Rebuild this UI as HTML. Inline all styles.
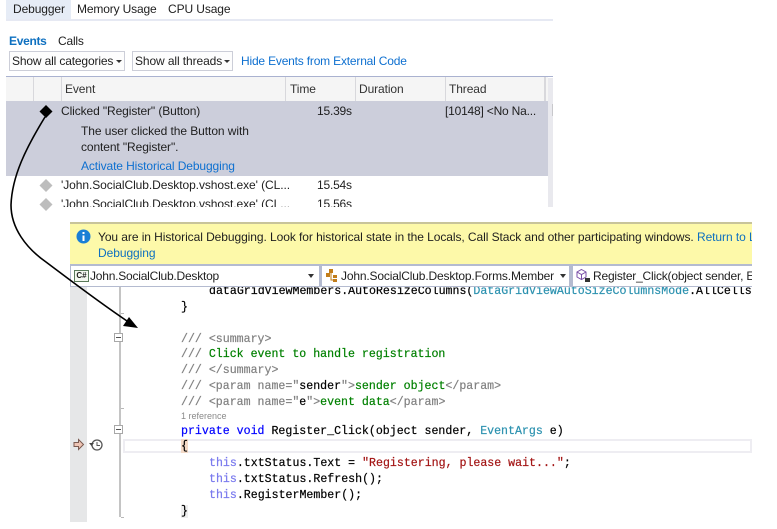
<!DOCTYPE html>
<html><head><meta charset="utf-8">
<style>
html,body{margin:0;padding:0;background:#fff}
#p{position:relative;width:777px;height:529px;overflow:hidden;background:#fff;font-family:"Liberation Sans",sans-serif;font-size:12px;color:#1e1e1e}
#p div{position:absolute}
.t{white-space:nowrap;line-height:16px;height:16px}
.c{white-space:pre;font-family:"Liberation Mono",monospace;font-size:11.6px;line-height:16px;height:16px;color:#000;-webkit-text-stroke:.2px}
.g{color:#808080}.gr{color:#008000}.b{color:#0000ff}.l{color:#2b91af}.k{color:#7a7aee}.r{color:#a31515}
.a{color:#0e70c0}
.dd{background:#fdfdfd;border:1px solid #ccced8;box-sizing:border-box;height:20px}
</style></head><body>
<div id="p">
<!-- tabs -->
<div style="left:6px;top:0;width:65px;height:19px;background:#e6ecf6"></div>
<div style="left:6px;top:19px;width:547px;height:2px;background:#e6e9f3"></div>
<div class="t" style="left:13px;top:1px;letter-spacing:-.1px">Debugger</div>
<div class="t" style="left:77px;top:1px;letter-spacing:-.15px">Memory Usage</div>
<div class="t" style="left:168px;top:1px;letter-spacing:-.1px">CPU Usage</div>
<div class="t" style="left:9px;top:33px;color:#0e70c0;font-weight:bold;letter-spacing:-.3px">Events</div>
<div class="t" style="left:58px;top:33px;letter-spacing:-.2px">Calls</div>
<!-- dropdowns -->
<div class="dd" style="left:9px;top:51px;width:116px"></div>
<div class="t" style="left:12px;top:53px;letter-spacing:-.15px">Show all categories</div>
<div style="left:116px;top:60px;border:3px solid transparent;border-top:3px solid #333;border-bottom:0"></div>
<div class="dd" style="left:132px;top:51px;width:101px"></div>
<div class="t" style="left:135px;top:53px;letter-spacing:-.1px">Show all threads</div>
<div style="left:224px;top:60px;border:3px solid transparent;border-top:3px solid #333;border-bottom:0"></div>
<div class="t a" style="left:241px;top:53px;letter-spacing:-.19px;color:#0e70d0">Hide Events from External Code</div>
<!-- header -->
<div style="left:6px;top:76px;width:547px;height:1px;background:#aab2d0"></div>
<div style="left:6px;top:77px;width:542px;height:24px;background:#f5f5f5"></div>
<div style="left:33px;top:77px;width:1px;height:24px;background:#d8d8dc"></div>
<div style="left:61px;top:77px;width:1px;height:24px;background:#d8d8dc"></div>
<div style="left:285px;top:77px;width:1px;height:24px;background:#d8d8dc"></div>
<div style="left:355px;top:77px;width:1px;height:24px;background:#d8d8dc"></div>
<div style="left:445px;top:77px;width:1px;height:24px;background:#d8d8dc"></div>
<div style="left:544px;top:77px;width:2px;height:24px;background:#d8d8dc"></div>
<div class="t" style="left:65px;top:81px;letter-spacing:-.1px;color:#333">Event</div>
<div class="t" style="left:290px;top:81px;letter-spacing:-.1px;color:#333">Time</div>
<div class="t" style="left:359px;top:81px;letter-spacing:-.1px;color:#333">Duration</div>
<div class="t" style="left:449px;top:81px;letter-spacing:-.1px;color:#333">Thread</div>
<!-- scrollbar -->
<div style="left:548px;top:78px;width:5px;height:129px;background:#e9e9ee"></div>
<div style="left:552px;top:104px;width:1px;height:12px;background:#c8c8cc"></div>
<!-- selected -->
<div style="left:6px;top:101px;width:542px;height:75px;background:#cccedb"></div>
<div class="t" style="left:61px;top:103px;letter-spacing:-.1px">Clicked "Register" (Button)</div>
<div class="t" style="left:317px;top:103px;letter-spacing:-.2px">15.39s</div>
<div class="t" style="left:445px;top:103px;letter-spacing:-.2px">[10148] &lt;No Na...</div>
<div class="t" style="left:81px;top:123px;letter-spacing:-.07px">The user clicked the Button with</div>
<div class="t" style="left:81px;top:139px;letter-spacing:-.1px">content "Register".</div>
<div class="t" style="left:81px;top:158px;letter-spacing:-.1px;color:#0e70d0">Activate Historical Debugging</div>
<!-- rows -->
<div class="t" style="left:61px;top:177px;letter-spacing:-.07px">'John.SocialClub.Desktop.vshost.exe' (CL...</div>
<div class="t" style="left:317px;top:177px;letter-spacing:-.2px">15.54s</div>
<div style="left:0;top:195px;width:548px;height:12px;overflow:hidden"><div class="t" style="left:61px;top:1px;letter-spacing:-.07px">'John.SocialClub.Desktop.vshost.exe' (CL...</div><div class="t" style="left:317px;top:1px;letter-spacing:-.2px">15.56s</div></div>
<!-- diamonds -->
<svg style="position:absolute;left:0;top:0" width="777" height="529">
<path d="M46 105l6.500 6.500-6.500 6.500-6.500-6.500z" fill="#000"/>
<path d="M46 179l6.500 6.500-6.500 6.500-6.500-6.500z" fill="#bdbdbd"/>
<path d="M46 198l6.500 6.500-6.500 6.500-6.500-6.500z" fill="#bdbdbd"/>
</svg>
<!-- info bar -->
<div style="left:70px;top:222px;width:682px;height:2px;background:#c8c49a"></div>
<div style="left:70px;top:224px;width:682px;height:40px;background:#fdf9a9"></div>
<svg style="position:absolute;left:76px;top:229px" width="15" height="15"><circle cx="7.500" cy="7.500" r="7" fill="#1a7fd6"/><rect x="6.500" y="6.500" width="2" height="5.500" fill="#fff"/><rect x="6.500" y="3" width="2" height="2" fill="#fff"/></svg>
<div style="left:0;top:224px;width:752px;height:40px;overflow:hidden">
<div class="t" style="left:98px;top:5px;letter-spacing:-.07px">You are in Historical Debugging. Look for historical state in the Locals, Call Stack and other participating windows. <span style="color:#0e70c0">Return to Live</span></div>
<div class="t" style="left:98px;top:21px;letter-spacing:-.06px;color:#0e70c0">Debugging</div>
</div>
<!-- nav bar -->
<div style="left:70px;top:264px;width:682px;height:23px;background:#b4bbd0"></div>
<div style="left:71px;top:266px;width:248px;height:20px;background:#fff"></div>
<div style="left:322px;top:266px;width:247px;height:20px;background:#fff"></div>
<div style="left:573px;top:266px;width:179px;height:20px;background:#fff"></div>
<div style="left:74px;top:270px;width:13px;height:10px;border:1px solid #5a7a5a;background:#f4f8f0;font:bold 8px/10px 'Liberation Sans',sans-serif;text-align:center;color:#222">C#</div>
<div class="t" style="left:90px;top:268px;letter-spacing:-.22px">John.SocialClub.Desktop</div>
<div style="left:308px;top:274px;border:3px solid transparent;border-top:4px solid #333;border-bottom:0"></div>
<svg style="position:absolute;left:324px;top:268px" width="16" height="16"><path d="M2 5h4v4H2zM5 1h4v4H5zM9 7h4v3H9zM9 11h4v3H9z" fill="#c27d1a"/><path d="M7 5v7h3" fill="none" stroke="#c27d1a"/></svg>
<div class="t" style="left:341px;top:268px;letter-spacing:-.16px">John.SocialClub.Desktop.Forms.Member</div>
<div style="left:560px;top:274px;border:3px solid transparent;border-top:4px solid #333;border-bottom:0"></div>
<svg style="position:absolute;left:575px;top:268px" width="16" height="16"><path d="M6.500 1.500l4.500 2.500v5l-4.500 2.500-4.500-2.500v-5zM2 4l4.500 2.500 4.500-2.500M6.500 6.500v5" fill="none" stroke="#7a4fa8"/><rect x="10" y="10" width="5" height="4" fill="#333"/></svg>
<div class="t" style="left:593px;top:268px;width:159px;overflow:hidden;letter-spacing:-.2px">Register_Click(object sender, EventArgs e)</div>
<!-- code -->
<div style="left:70px;top:287px;width:682px;height:235px;background:#fff"></div>
<div style="left:70px;top:287px;width:17px;height:235px;background:#e6e7e8"></div>
<div style="left:119px;top:287px;width:2px;height:230px;background:#c4c4c4"></div>
<div style="left:121px;top:313px;width:3px;height:1px;background:#b8b8b8"></div>
<div style="left:121px;top:408px;width:3px;height:1px;background:#b8b8b8"></div>
<div style="left:121px;top:517px;width:3px;height:1px;background:#b8b8b8"></div>
<div style="left:114px;top:333px;width:7px;height:7px;border:1px solid #a8a8a8;background:#fff"></div>
<div style="left:116px;top:337px;width:5px;height:1px;background:#555"></div>
<div style="left:114px;top:425px;width:7px;height:7px;border:1px solid #a8a8a8;background:#fff"></div>
<div style="left:116px;top:429px;width:5px;height:1px;background:#555"></div>
<!-- current line -->
<div style="left:123px;top:439px;width:625px;height:10px;border:2px solid #eeedf2;background:#fff"></div>
<div style="left:181px;top:439px;width:7px;height:14px;background:#f3d9c6"></div>
<div style="left:181px;top:505px;width:7px;height:13px;background:#eeeeee"></div>
<div style="left:0;top:287px;width:752px;height:235px;overflow:hidden">
<div class="c" style="left:209px;top:-3px">dataGridViewMembers.AutoResizeColumns(<span class="l">DataGridViewAutoSizeColumnsMode</span>.AllCells);</div>
<div class="c" style="left:181px;top:13px">}</div>
<div class="c g" style="left:181px;top:45px">/// &lt;summary&gt;</div>
<div class="c gr" style="left:181px;top:59px;top:60px"><span class="g">///</span> Click event to handle registration</div>
<div class="c g" style="left:181px;top:76px">/// &lt;/summary&gt;</div>
<div class="c g" style="left:181px;top:92px">/// &lt;param name="<span style="color:#000">sender</span>"&gt;<span class="gr">sender object</span>&lt;/param&gt;</div>
<div class="c g" style="left:181px;top:108px">/// &lt;param name="<span style="color:#000">e</span>"&gt;<span class="gr">event data</span>&lt;/param&gt;</div>
<div class="t" style="left:181px;top:121px;font-size:9px;color:#8a8a8a">1 reference</div>
<div class="c" style="left:181px;top:137px"><span class="b">private void</span> Register_Click(object sender, <span class="l">EventArgs</span> e)</div>
<div class="c" style="left:181px;top:152px">{</div>
<div class="c" style="left:209px;top:169px"><span class="k">this</span>.txtStatus.Text = <span class="r">"Registering, please wait..."</span>;</div>
<div class="c" style="left:209px;top:185px"><span class="k">this</span>.txtStatus.Refresh();</div>
<div class="c" style="left:209px;top:201px"><span class="k">this</span>.RegisterMember();</div>
<div class="c" style="left:181px;top:217px">}</div>
</div>
<!-- margin icons -->
<svg style="position:absolute;left:0;top:0" width="777" height="529">
<path d="M74 442.500h4.500v-3l5 5-5 5v-3H74z" fill="#eec4b4" stroke="#7a5a50"/>
<circle cx="97" cy="445" r="5" fill="#fff" stroke="#555" stroke-width="1.300"/>
<path d="M97 442v3.500h3" fill="none" stroke="#555"/>
<path d="M89 443h5l-2.500 3z" fill="#444"/>
<!-- arrow -->
<path d="M45 117C26 148 12 176 11 205 11 228 26 248 46 262 70 280 100 303 130 323" fill="none" stroke="#000" stroke-width="1.600"/>
<path d="M138 328l-15-2 6-9z" fill="#000"/>
</svg>
</div>
</body></html>
